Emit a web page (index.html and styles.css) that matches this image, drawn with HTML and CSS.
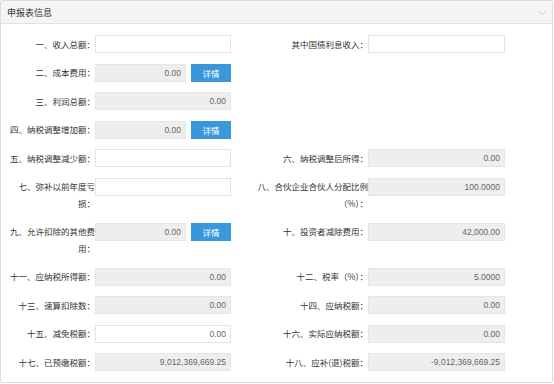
FILE: index.html
```html
<!DOCTYPE html>
<html lang="zh-CN">
<head>
    <meta charset="UTF-8">
    <title>申报表信息</title>
    <link rel="stylesheet" href="styles.css">
</head>
<body>
    <div class="panel">
        <div class="panel-head">
            <span class="panel-title">申报表信息</span>
            <svg class="chevron" width="9" height="5" viewBox="0 0 9 5"><path d="M0.5 0.5 L4.5 4.5 L8.5 0.5" fill="none" stroke="#c8c8c8" stroke-width="1"/></svg>
        </div>
        <div class="panel-body">
            <div class="form-grid">
                <div class="item left">
                    <label>一、收入总额：</label>
                    <div class="field"><input class="box" type="text" value=""></div>
                </div>
                <div class="item right">
                    <label>其中国债利息收入：</label>
                    <div class="field"><input class="box" type="text" value=""></div>
                </div>

                <div class="item left">
                    <label>二、成本费用：</label>
                    <div class="field"><input class="box short" type="text" value="0.00" disabled><button class="btn">详情</button></div>
                </div>
                <div class="item right"></div>

                <div class="item left">
                    <label>三、利润总额：</label>
                    <div class="field"><input class="box" type="text" value="0.00" disabled></div>
                </div>
                <div class="item right"></div>

                <div class="item left">
                    <label>四、纳税调整增加额：</label>
                    <div class="field"><input class="box short" type="text" value="0.00" disabled><button class="btn">详情</button></div>
                </div>
                <div class="item right"></div>

                <div class="item left">
                    <label>五、纳税调整减少额：</label>
                    <div class="field"><input class="box" type="text" value=""></div>
                </div>
                <div class="item right">
                    <label>六、纳税调整后所得：</label>
                    <div class="field"><input class="box" type="text" value="0.00" disabled></div>
                </div>

                <div class="item left">
                    <label>七、弥补以前年度亏损：</label>
                    <div class="field"><input class="box" type="text" value=""></div>
                </div>
                <div class="item right">
                    <label>八、合伙企业合伙人分配比例（%）：</label>
                    <div class="field"><input class="box" type="text" value="100.0000" disabled></div>
                </div>

                <div class="item left">
                    <label>九、允许扣除的其他费用：</label>
                    <div class="field"><input class="box short" type="text" value="0.00" disabled><button class="btn">详情</button></div>
                </div>
                <div class="item right">
                    <label>十、投资者减除费用：</label>
                    <div class="field"><input class="box" type="text" value="42,000.00" disabled></div>
                </div>

                <div class="item left">
                    <label>十一、应纳税所得额：</label>
                    <div class="field"><input class="box" type="text" value="0.00" disabled></div>
                </div>
                <div class="item right">
                    <label>十二、税率（%）：</label>
                    <div class="field"><input class="box" type="text" value="5.0000" disabled></div>
                </div>

                <div class="item left">
                    <label>十三、速算扣除数：</label>
                    <div class="field"><input class="box" type="text" value="0.00" disabled></div>
                </div>
                <div class="item right">
                    <label>十四、应纳税额：</label>
                    <div class="field"><input class="box" type="text" value="0.00" disabled></div>
                </div>

                <div class="item left">
                    <label>十五、减免税额：</label>
                    <div class="field"><input class="box" type="text" value="0.00"></div>
                </div>
                <div class="item right">
                    <label>十六、实际应纳税额：</label>
                    <div class="field"><input class="box" type="text" value="0.00" disabled></div>
                </div>

                <div class="item left">
                    <label>十七、已预缴税额：</label>
                    <div class="field"><input class="box" type="text" value="9,012,369,669.25" disabled></div>
                </div>
                <div class="item right">
                    <label>十八、应补(退)税额：</label>
                    <div class="field"><input class="box" type="text" value="-9,012,369,669.25" disabled></div>
                </div>
            </div>
        </div>
    </div>
</body>
</html>
```

FILE: styles.css
```css
*{
  margin:0;
  padding:0;
  box-sizing:border-box;
}
body{
  background:#fff;
  font-family:"Noto Sans CJK SC", "Liberation Sans", sans-serif;
  color:#333;
}
.panel{
  width:553px;
  height:383px;
  border:1px solid #dcdcdc;
  border-radius:2px;
  background:#fff;
}
.panel-head{
  height:23px;
  background:#f5f5f5;
  border-bottom:1px solid #e2e2e2;
  display:flex;
  align-items:center;
  justify-content:space-between;
  padding:0 5px 0 6px;
}
.panel-title{
  font-size:9px;
  color:#333;
}
.chevron{
  margin-top:1px;
}
.panel-body{
  padding:11px 0 0 6px;
}
.form-grid{
  display:grid;
  grid-template-columns:224px 250px;
  column-gap:24px;
  row-gap:10.5px;
  align-items:start;
}
.item{
  display:flex;
  align-items:flex-start;
}
.item label{
  font-size:8.5px;
  line-height:17px;
  color:#333;
  text-align:right;
  padding-top:0.5px;
}
.left label{
  width:88px;
}
.right label{
  width:113px;
}
.field{
  display:flex;
  gap:5px;
  flex:1;
}
.box{
  width:100%;
  height:18px;
  border:1px solid #e3e3e3;
  background:#fff;
  font-family:"Liberation Sans", sans-serif;
  font-size:8.5px;
  color:#666;
  text-align:right;
  padding:0 4px;
  outline:none;
}
.box:disabled{
  background:#eeeeee;
  border-color:#e6e6e6;
  color:#666;
}
.box.short{
  width:91px;
  flex:none;
}
.btn{
  width:40px;
  height:18px;
  border:none;
  background:#3b97dc;
  color:#fff;
  font-family:"Noto Sans CJK SC", sans-serif;
  font-size:8.5px;
  cursor:pointer;
}
```
